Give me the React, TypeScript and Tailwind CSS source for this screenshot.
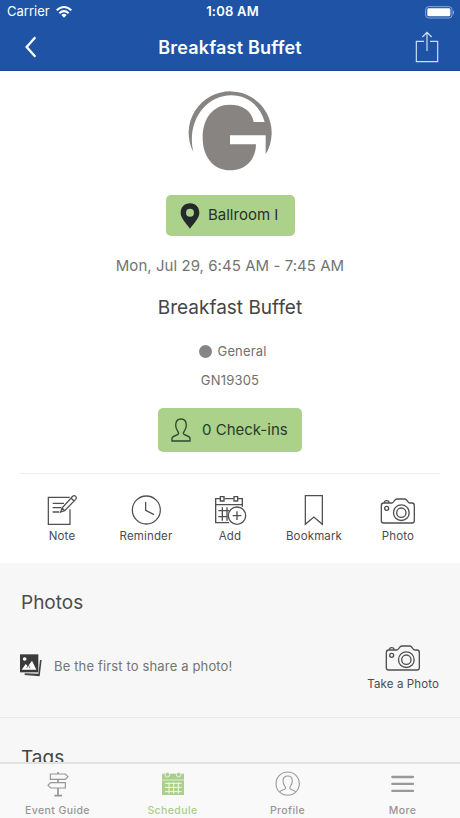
import type { ReactNode } from "react";

function CameraIcon() {
  return (
    <svg width="36" height="28" viewBox="0 0 108 84" fill="none" stroke="#505050" strokeWidth="4">
      <path d="M11 18H36C42 18 42 7 50 6H75C83 7 82 18 90 18H96Q103 18 103 26V71Q103 78 96 78H11Q4 78 4 71V26Q4 18 11 18Z" />
      <path d="M13 17Q13 11 20 11Q27 11 27 17" />
      <circle cx="20" cy="34" r="6" />
      <circle cx="64" cy="47" r="23.5" />
      <circle cx="64" cy="47" r="14" />
    </svg>
  );
}

function NoteIcon() {
  return (
    <svg width="32" height="32" viewBox="0 0 96 96" fill="none" stroke="#505050" strokeWidth="3.8">
      <path d="M71 10H7V91H72V46" />
      <path d="M20 28H54M20 41H46M20 54H40" />
      <path d="M44 54L48 42L80 7Q85 3 89 7Q93 11 89 16L56 50ZM75 12L84 21M48 42L56 50" />
    </svg>
  );
}

function ClockIcon() {
  return (
    <svg width="32" height="32" viewBox="0 0 96 96" fill="none" stroke="#505050" strokeWidth="3.8">
      <circle cx="49" cy="48" r="42" />
      <path d="M47 24V49L72 62" />
    </svg>
  );
}

function AddIcon() {
  return (
    <svg width="34" height="32" viewBox="0 0 102 96" fill="none" stroke="#505050" strokeWidth="4">
      <path d="M22 14H8V86H48M34 14H62M74 14H88V38M8 32H88" />
      <path d="M22 8H33V21H22ZM63 8H74V21H63Z" />
      <path d="M16 50H48M16 68H44M28 40V80M42 40V80" />
      <circle cx="72" cy="65" r="26" />
      <path d="M72 52V78M59 65H85" />
    </svg>
  );
}

function BookmarkIcon() {
  return (
    <svg width="32" height="32" viewBox="0 0 96 96" fill="none" stroke="#505050" strokeWidth="3.8">
      <path d="M22 5H73V91L47.500 69L22 91Z" />
    </svg>
  );
}

function SignpostIcon() {
  return (
    <svg width="24" height="28" viewBox="0 0 72 84" fill="none" stroke="#969696" strokeWidth="3.5">
      <path d="M13 12H58L66 20L58 28H13ZM58 38H14L6 46L14 54H58Z" />
      <path d="M36 6V12M36 28V38" strokeWidth="5" />
      <path d="M36 54V76M25 77H48" strokeWidth="5" />
    </svg>
  );
}

function ScheduleIcon() {
  return (
    <svg width="24" height="28" viewBox="0 0 72 84">
      <path d="M3 11H69V75H3Z" fill="#a9cf88" />
      <path d="M3 30H69" stroke="#f9f9f9" strokeWidth="2" />
      <path d="M12 40H62M12 52H62M12 65H62M24 37V71M38 37V71M52 37V71" stroke="#f2f8ed" strokeWidth="3" />
      <circle cx="19" cy="14" r="7" fill="#a9cf88" stroke="#f9f9f9" strokeWidth="2.500" />
      <circle cx="53" cy="14" r="7" fill="#a9cf88" stroke="#f9f9f9" strokeWidth="2.500" />
    </svg>
  );
}

function ProfileIcon() {
  return (
    <svg width="26" height="28" viewBox="0 0 78 84" fill="none" stroke="#999999" strokeWidth="3.2">
      <circle cx="38" cy="41" r="35" />
      <path d="M14 66C18 59 31 61 32 54C32 50 24 45 24 33C24 23 30 18 38 18S52 23 52 33C52 45 44 50 44 54C45 61 58 59 62 66" />
    </svg>
  );
}

function MenuIcon() {
  return (
    <svg width="24" height="28" viewBox="0 0 72 84" stroke="#999999" strokeWidth="7" strokeLinecap="round">
      <path d="M4 21H66M4 41.500H66M4 62.500H66" />
    </svg>
  );
}

function Action({ label, children }: { label: string; children: ReactNode }) {
  return (
    <button className="flex flex-col items-center">
      <span className="flex h-8 items-center">{children}</span>
      <span className="mt-[2px] text-[11.5px] leading-4 tracking-[0.15px] whitespace-nowrap text-[#4c4c4c]">{label}</span>
    </button>
  );
}

function Tab({ label, active = false, children }: { label: string; active?: boolean; children: ReactNode }) {
  return (
    <button className={`flex flex-col items-center pt-[6px] ${active ? "text-[#a9cf88]" : "text-[#969696]"}`}>
      {children}
      <span className="mt-[6px] text-[10.5px] leading-[14px] font-medium tracking-[0.4px]">{label}</span>
    </button>
  );
}

export default function App() {
  return (
    <div className="flex h-[818px] w-[460px] flex-col overflow-hidden bg-white font-['Inter','Liberation_Sans',sans-serif]">
      <header className="h-[71px] shrink-0 border-b border-[#17479a] bg-[#1e53a6] text-white">
        <div className="grid h-6 grid-cols-3 items-center pl-[7px] pr-[5px] text-[13px]">
          <div className="flex items-center gap-[6px]">
            <span>Carrier</span>
            <svg width="16" height="12" viewBox="0 0 48 36" fill="none" stroke="white" strokeWidth="6">
              <path d="M2 13Q24 -7 46 13M10 22Q24 9 38 22" />
              <path d="M16 27Q24 20 32 27L24 35Z" fill="white" stroke="none" />
            </svg>
          </div>
          <span className="pl-[3px] text-center font-semibold tracking-[0.2px]">1:08 AM</span>
          <div className="flex justify-end">
            <svg width="30" height="13" viewBox="0 0 90 39" fill="none">
              <rect x="2" y="2" width="79" height="34" rx="9" stroke="#9db7dd" strokeWidth="2.500" />
              <rect x="7" y="7" width="69" height="24" rx="4" fill="white" />
              <path d="M84 13Q90 19 84 26Z" fill="#9db7dd" />
            </svg>
          </div>
        </div>
        <div className="flex h-[46px] items-center justify-between pl-[22px] pr-5">
          <svg width="18" height="24" viewBox="0 0 54 72" fill="none" stroke="white" strokeWidth="7">
            <path d="M40 7L14 36L40 65" />
          </svg>
          <h1 className="pl-[6px] text-[18px] font-semibold tracking-[0.2px]">Breakfast Buffet</h1>
          <svg width="26" height="32" viewBox="0 0 78 96" fill="none" stroke="#d3dff1" strokeWidth="3.5">
            <path d="M30 31H7V92H71V31H48M39 60V5M25 18L39 4L53 18" />
          </svg>
        </div>
      </header>

      <main className="flex min-h-0 flex-1 flex-col overflow-hidden">
        <section className="flex h-[492px] shrink-0 flex-col items-center px-5 pt-[19px]">
          <svg width="86" height="84" viewBox="50 29 258 252" fill="#888482">
            <path d="M69 215A124.500 124.500 0 1 1 286 222V165H179V192H257C256 240 225 270 180 270C130 270 97 230 97 172C97 112 130 73 178 73C217 73 244 91 250 125H283C270 75 230 45 183 45C105 45 48 125 69 215Z" />
          </svg>
          <button className="mt-[21px] ml-px flex h-[41px] w-[129px] items-center rounded-[5px] bg-[#abd18b] pl-[14px] text-[15px] text-[#263128]">
            <svg width="20" height="26" viewBox="0 0 60 78" fill="#24292b">
              <path fillRule="evenodd" d="M30 1C13 1 2 13 2 30C2 45 20 63 30 77C40 63 58 45 58 30C58 13 47 1 30 1ZM30 17A12 12 0 1 1 30 41A12 12 0 0 1 30 17Z" />
            </svg>
            <span className="ml-[8px] whitespace-nowrap">Ballroom I</span>
          </button>
          <p className="mt-[20px] text-[15px] leading-5 tracking-[0.05px] text-[#737373]">Mon, Jul 29, 6:45 AM - 7:45 AM</p>
          <h2 className="mt-[18px] text-[19px] leading-7 text-[#454545]">Breakfast Buffet</h2>
          <p className="mt-[19px] flex items-center gap-[6px] pl-[5px] text-[13px] leading-5 tracking-[0.15px] text-[#707070]">
            <span className="size-[13px] rounded-full bg-[#858585]" />General
          </p>
          <p className="mt-[9px] text-[13px] leading-5 tracking-[0.2px] text-[#707070]">GN19305</p>
          <button className="mt-[18px] flex h-11 w-[144px] items-center rounded-[5px] bg-[#abd18b] pl-[13px] text-[15px] text-[#263c2c]">
            <svg width="20" height="24" viewBox="0 0 60 72" fill="none" stroke="#2d4931" strokeWidth="4">
              <path d="M3 69V61C4 51 22 54 23 46C23 41 14 35 14 22C14 9 20 3 30 3S46 9 46 22C46 35 37 41 37 46C38 54 56 51 57 61V69Z" />
            </svg>
            <span className="mt-px ml-[11px] whitespace-nowrap">0 Check-ins</span>
          </button>
          <div className="mt-[21px] grid w-full grid-cols-5 border-t border-[#ededed] pt-5">
            <Action label="Note"><NoteIcon /></Action>
            <Action label="Reminder"><ClockIcon /></Action>
            <Action label="Add"><AddIcon /></Action>
            <Action label="Bookmark"><BookmarkIcon /></Action>
            <Action label="Photo"><span className="pt-px"><CameraIcon /></span></Action>
          </div>
        </section>

        <section className="h-[155px] shrink-0 border-b border-[#e9e9e9] bg-[#f7f7f7] pt-[26px] pr-[21px] pl-5">
          <h3 className="pl-px text-[19px] leading-7 text-[#4c4c4c]">Photos</h3>
          <div className="flex items-start justify-between pt-[27px]">
            <div className="flex items-center pt-[10px]">
              <svg width="23" height="24" viewBox="0 0 69 72">
                <path d="M14 63L59 67L65 18H60L55 59L14 58Z" fill="#444" />
                <path d="M0 1H55V55H0Z" fill="#3b3b3b" />
                <circle cx="14" cy="15" r="5.500" fill="white" />
                <path d="M5 47L17 30L24 37L36 20L49 47Z" fill="white" />
                <path d="M20 42L25 32L30 43" fill="none" stroke="#3b3b3b" strokeWidth="2" />
              </svg>
              <p className="ml-[11px] text-[13px] leading-5 tracking-[0.15px] text-[#747474]">Be the first to share a photo!</p>
            </div>
            <button className="flex flex-col items-center">
              <CameraIcon />
              <span className="mt-[4px] text-[11.5px] leading-4 tracking-[0.12px] whitespace-nowrap text-[#4c4c4c]">Take a Photo</span>
            </button>
          </div>
        </section>
        <section className="min-h-0 flex-1 bg-[#f7f7f7] px-5 pt-[26px]">
          <h3 className="pl-px text-[19px] leading-7 text-[#454545]">Tags</h3>
        </section>
      </main>

      <nav className="grid h-14 shrink-0 grid-cols-4 border-t-2 border-[#e2e2e2] bg-[#f9f9f9]">
        <Tab label="Event Guide"><SignpostIcon /></Tab>
        <Tab label="Schedule" active><ScheduleIcon /></Tab>
        <Tab label="Profile"><ProfileIcon /></Tab>
        <Tab label="More"><MenuIcon /></Tab>
      </nav>
    </div>
  );
}
